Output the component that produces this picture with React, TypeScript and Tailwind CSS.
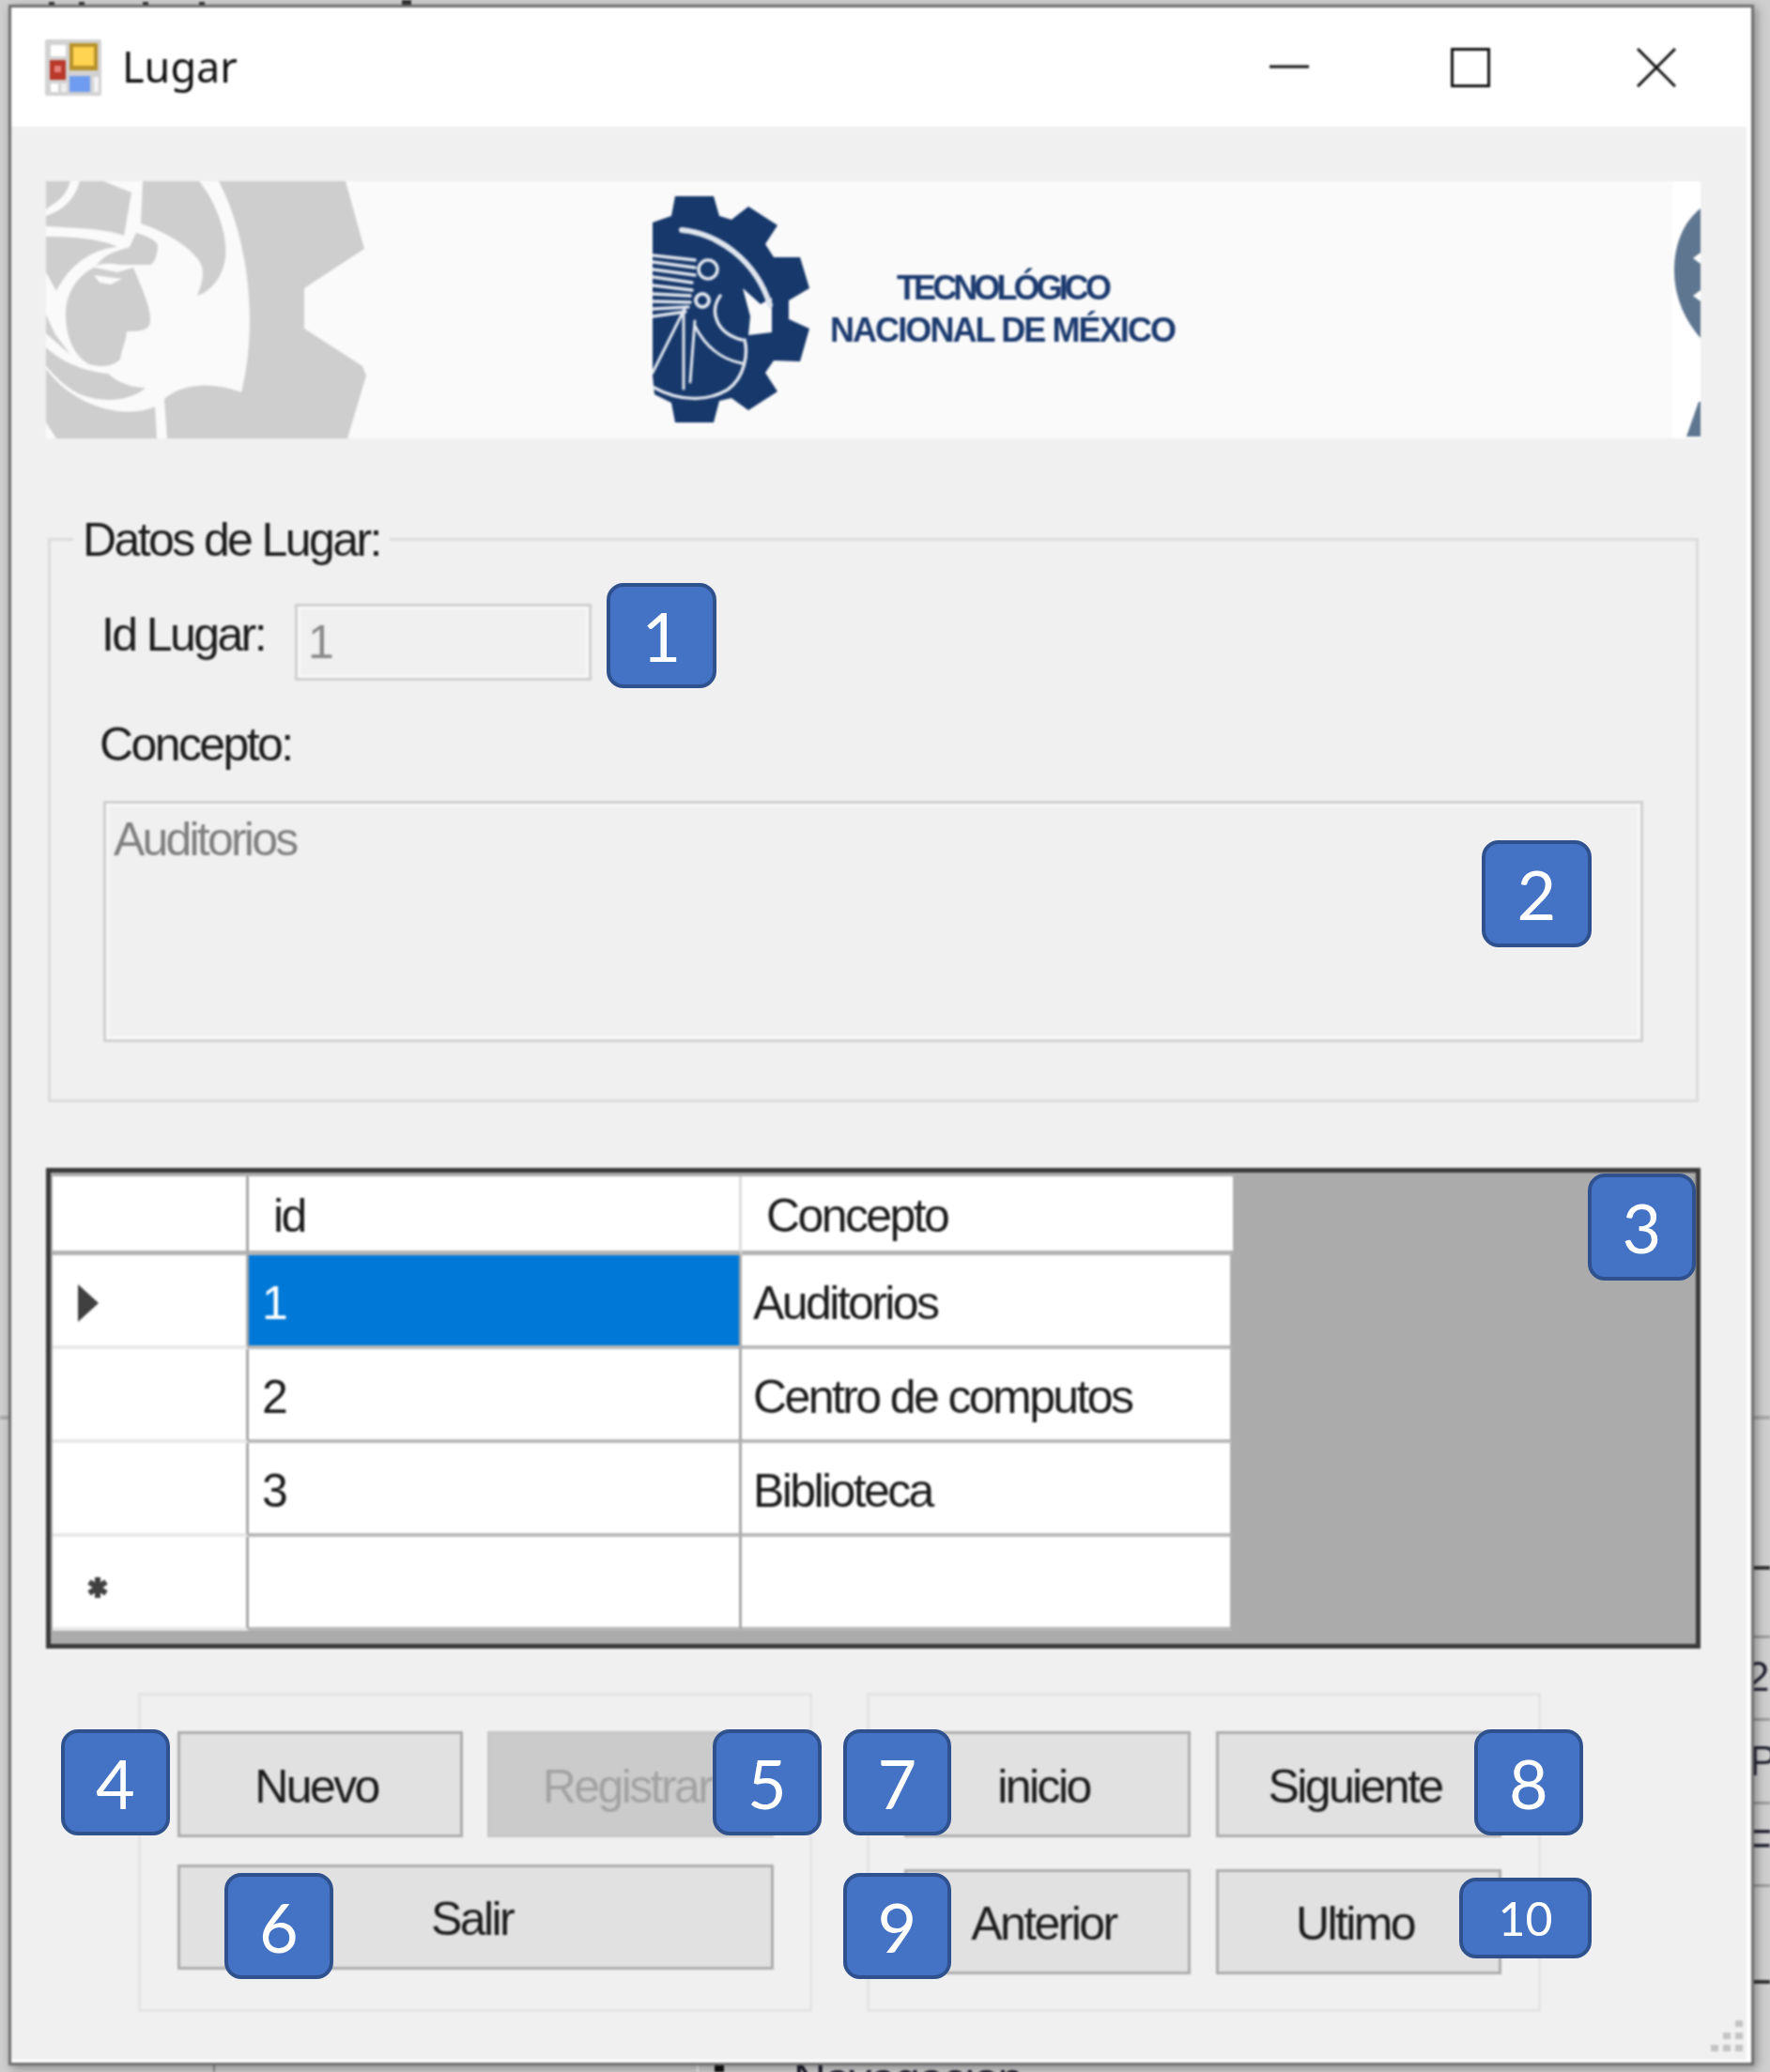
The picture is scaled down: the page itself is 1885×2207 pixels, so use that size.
const textCls = "text-[50px] leading-[50px] tracking-[-2.6px] text-[#1c1c1c]";

const Badge = ({ className, label }: { className: string; label: string }) => (
  <div
    className={`absolute flex items-center justify-center rounded-[18px] border-[4px] border-[#2f528f] bg-[#4472c4] font-['Lato',sans-serif] text-white ${className}`}
  >
    {label}
  </div>
);

const WinButton = ({
  label,
  className,
  disabled,
}: {
  label: string;
  className: string;
  disabled?: boolean;
}) => (
  <button
    className={`flex items-center justify-center border-[3px] pr-[8px] pt-[4px] text-[50px] leading-[50px] tracking-[-2.6px] ${
      disabled
        ? "border-[#c6c6c6] bg-[#cbcbcb] text-[#a3a3a3]"
        : "border-[#adadad] bg-[#e1e1e1] text-[#1c1c1c]"
    } ${className}`}
  >
    {label}
  </button>
);

const AppIcon = () => (
  <svg width="60" height="60" viewBox="0 0 60 60" className="shrink-0">
    <rect width="60" height="60" rx="2" fill="#d2d2d2" />
    <rect x="6" y="6" width="16" height="12" fill="#fff" />
    <rect x="26" y="4" width="30" height="29" fill="#b8922a" />
    <rect x="30" y="8" width="22" height="20" fill="#ffd451" />
    <rect x="5" y="22" width="17" height="21" fill="#b8392a" />
    <rect x="10" y="28" width="7" height="7" fill="#e8837a" />
    <rect x="6" y="47" width="8" height="9" fill="#fff" />
    <rect x="17" y="47" width="6" height="9" fill="#eee" />
    <rect x="26" y="39" width="22" height="17" fill="#6f9bf0" />
    <rect x="52" y="40" width="5" height="16" fill="#f2f2f2" />
  </svg>
);

const Watermark = () => (
  <svg width="341" height="274" viewBox="9 8 341 274" className="shrink-0">
    <path d="M9 8H328L348 80L284 122V165L346 205L350 215L330 282H20L9 265Z" fill="#cecece" />
    <path
      d="M172 8H193C225 70 235 160 217 233C190 222 155 222 135 240L138 282H127L125 248C95 262 40 250 9 208V8Z"
      fill="#fafafa"
    />
    <g fill="#cecece">
      <path d="M9 8H35C30 25 20 30 9 38Z" />
      <path d="M45 8H70L100 20L92 66C70 58 40 58 9 56V45C30 38 40 25 45 8Z" />
      <path d="M112 8H172C190 30 203 65 200 90C197 110 185 125 170 130C178 110 178 100 170 90C155 72 130 60 110 53Z" />
      <path d="M105 63C115 66 125 70 128 76C128 85 125 95 120 97L88 97C75 95 65 95 60 100L70 90C80 82 95 80 98 78Z" />
      <path d="M9 67C40 67 70 70 85 78C60 80 35 95 20 125L9 105Z" />
      <path d="M60 100L85 105L102 100C110 120 120 140 120 155C120 165 115 168 95 168C95 175 90 185 88 198C80 205 70 207 55 203C40 195 30 175 30 150C30 130 40 110 60 100Z" />
      <path d="M9 150L18 170L35 193L9 170Z" />
      <path d="M9 185C30 205 60 212 75 213C85 222 100 228 115 228C100 242 70 245 45 235C30 228 18 215 9 205Z" />
    </g>
    <path d="M60 108L90 112L78 118L66 116Z" fill="#fafafa" />
  </svg>
);

const TecnmLogo = () => (
  <svg width="167" height="245" viewBox="0 0 167 245" className="ml-[305px] mt-[14px] shrink-0 self-start">
    <polygon
      points="24,2 65,2 71,23 84,27 102,13 133,33 120,53 129,67 157,67 167,100 145,113 145,133 167,143 157,178 129,177 120,190 133,210 102,230 84,217 71,220 65,243 24,243 20,222 2,213 0,193 0,30 20,23"
      fill="#17386b"
    />
    <polygon points="96,100 115,117 127,110 127,147 102,150 104,130" fill="#fafafa" />
    <g fill="none" stroke="#dfe5ee" strokeLinecap="round">
      <path d="M31 38C70 42 110 70 125 118" strokeWidth="6" />
      <path d="M0 65L45 70M0 72L45 78M0 80L45 86M0 88L42 94M0 97L42 102M0 106L40 108M0 114L40 115M0 122L38 120M0 130L35 125" strokeWidth="3.5" />
      <circle cx="59" cy="80" r="10" strokeWidth="3.5" />
      <circle cx="53" cy="113" r="7" strokeWidth="4" />
      <path d="M72 108C60 125 68 148 95 155" strokeWidth="3.5" />
      <path d="M35 120L0 190M33 125V207M45 135L40 200" strokeWidth="3" />
      <path d="M0 205C30 222 60 220 80 208C98 195 102 170 98 155" strokeWidth="3.5" />
      <path d="M45 140C55 160 70 175 95 180" strokeWidth="3" />
    </g>
  </svg>
);

const WindowControls = () => (
  <div className="ml-auto flex items-center gap-[152px] pr-[80px]">
    <svg width="42" height="42" viewBox="0 0 42 42">
      <path d="M0 20H42" stroke="#111" strokeWidth="3" />
    </svg>
    <svg width="42" height="42" viewBox="0 0 42 42" className="-ml-[1px]">
      <rect x="1.5" y="1.5" width="39" height="39" fill="none" stroke="#111" strokeWidth="3" />
    </svg>
    <svg width="42" height="42" viewBox="0 0 42 42" className="ml-[4px]">
      <path d="M1 1L41 41M41 1L1 41" stroke="#111" strokeWidth="3" />
    </svg>
  </div>
);

const rows = [
  { id: "1", concepto: "Auditorios", marker: "arrow" },
  { id: "2", concepto: "Centro de computos", marker: "" },
  { id: "3", concepto: "Biblioteca", marker: "" },
  { id: "", concepto: "", marker: "star" },
];

const DataGrid = () => (
  <div className="mt-[70px] h-[512px] w-[1762px] border-[5px] border-[#3a3a3a] bg-[#ababab] pl-[2px] pt-[4px]">
    <div className="grid w-[1257px] grid-cols-[209px_525px_523px] bg-white">
      <div className="h-[84px] border-b-[5px] border-r-[3px] border-b-[#b4b4b4] border-r-[#a8a8a8]" />
      <div className={`flex h-[84px] items-center border-b-[5px] border-r-[3px] border-b-[#b4b4b4] border-r-[#dcdcdc] pl-[26px] pt-[4px] ${textCls}`}>
        id
      </div>
      <div className={`flex h-[84px] items-center border-b-[5px] border-b-[#b4b4b4] pl-[26px] pt-[4px] ${textCls}`}>
        Concepto
      </div>
      {rows.map((r) => (
        <div key={r.concepto + r.id} className="contents">
          <div className="flex h-[100px] items-center border-b-[4px] border-r-[3px] border-b-[#e8e8e8] border-r-[#a8a8a8] pl-[27px] pt-[6px]">
            {r.marker === "arrow" && (
              <svg width="22" height="40" viewBox="0 0 22 40">
                <path d="M0 0L22 20L0 40Z" fill="#404040" />
              </svg>
            )}
            {r.marker === "star" && (
              <svg width="24" height="26" viewBox="0 0 24 26" className="ml-[9px] mt-[6px]">
                <path d="M12 2V24M3 7L21 19M21 7L3 19" stroke="#404040" strokeWidth="6" />
              </svg>
            )}
          </div>
          <div
            className={`flex h-[100px] items-center border-b-[4px] border-r-[3px] border-b-[#b8b8b8] border-r-[#a8a8a8] pl-[14px] pt-[6px] ${textCls} ${
              r.id === "1" ? "bg-[#0078d7] text-white" : ""
            }`}
          >
            {r.id}
          </div>
          <div className={`flex h-[100px] items-center border-b-[4px] border-r-[3px] border-b-[#b8b8b8] border-r-[#ababab] pl-[12px] pt-[6px] ${textCls}`}>
            {r.concepto}
          </div>
        </div>
      ))}
    </div>
  </div>
);

// what shows of the main form behind the dialog
const BehindStrips = () => (
  <>
    <div className="absolute left-0 right-0 top-[1508px] h-[4px] bg-[#a9a9a9]" />
    <div className="absolute left-[52px] top-0 flex h-[6px] gap-[26px]">
      <div className="mt-[2px] h-[4px] w-[6px] bg-[#333]" />
      <div className="mt-[2px] h-[4px] w-[6px] bg-[#333]" />
      <div className="ml-[36px] mt-[2px] h-[4px] w-[6px] bg-[#333]" />
      <div className="ml-[28px] mt-[2px] h-[4px] w-[6px] bg-[#333]" />
      <div className="ml-[184px] h-[6px] w-[10px] bg-[#333]" />
    </div>
    <div className="absolute left-[1860px] top-[1668px] flex w-[25px] flex-col border-b-[4px] border-t-[4px] border-[#333] text-[44px] leading-[44px] text-[#223]">
      <div className="flex h-[73px] items-center border-b-[3px] border-[#9a9a9a]" />
      <div className="flex h-[88px] items-center border-b-[3px] border-[#9a9a9a] pb-[4px] pl-[-4px]">2</div>
      <div className="flex h-[89px] items-center border-b-[3px] border-[#9a9a9a] pl-[3px]">P</div>
      <div className="flex h-[88px] items-center border-b-[3px] border-[#9a9a9a]">F</div>
      <div className="h-[99px]" />
    </div>
    <div className="absolute bottom-0 left-0 flex h-[12px] w-full items-start text-[48px] leading-[48px] tracking-[-1px] text-[#1c1c2c]">
      <div className="ml-[227px] h-full w-[2px] bg-[#8a8a8a]" />
      <div className="ml-[513px] h-full w-[2px] bg-[#f0f0f0]" />
      <div className="ml-[17px] h-full w-[10px] bg-[#111]" />
      <span className="-mt-[4px] ml-[74px]">Navegacion</span>
    </div>
  </>
);

const App = () => (
  <div className="relative h-[2207px] w-[1885px] overflow-hidden bg-[#cfcfcf] font-['Liberation_Sans',sans-serif]">
    <div className="h-full w-full pl-[9px] pt-[5px] blur-[0.8px]">
      <BehindStrips />

      <div className="relative flex h-[2195px] w-[1859px] flex-col border-[3px] border-[#6f6f6f] bg-[#f0f0f0] shadow-[3px_3px_10px_rgba(0,0,0,0.35)]">
        {/* title bar */}
        <div className="flex h-[127px] shrink-0 items-center bg-white pl-[36px]">
          <AppIcon />
          <span className="mb-[2px] ml-[22px] font-['Noto_Sans',sans-serif] text-[45px] leading-[50px] text-[#111]">Lugar</span>
          <WindowControls />
        </div>

        <div className="flex flex-1 flex-col border-b-[3px] border-r-[5px] border-white pl-[37px] pt-[58px]">
          {/* banner */}
          <div className="flex h-[274px] w-[1762px] bg-[#fafafa]">
            <Watermark />
            <TecnmLogo />
            <div className="ml-[25px] mt-[91px] flex w-[361px] flex-col items-center self-start whitespace-nowrap font-bold text-[36px] leading-[45px] text-[#1b3a6f]">
              <span className="tracking-[-3.9px]">TECNOLÓGICO</span>
              <span className="tracking-[-1.9px]">NACIONAL DE MÉXICO</span>
            </div>
            <svg width="30" height="274" viewBox="0 0 30 274" className="ml-auto bg-white">
              <path
                d="M30 29C10 45 2 70 2 95C2 125 15 150 30 167V128L22 122L30 116V88L22 82L30 76Z"
                fill="#5f7690"
              />
              <path d="M28 235L15 272H30V235Z" fill="#5f7690" />
            </svg>
          </div>

          {/* Datos de Lugar */}
          <div className="relative ml-[2px] mt-[106px] h-[601px] w-[1758px] shrink-0 border-[3px] border-[#dcdcdc] pl-[54px] pt-[67px]">
            <span className={`absolute -top-[26px] left-[24px] bg-[#f0f0f0] px-[10px] ${textCls}`}>
              Datos de Lugar:
            </span>
            <div className="flex items-center">
              <span className={`w-[206px] pb-[16px] ${textCls}`}>Id Lugar:</span>
              <div className="flex h-[82px] w-[316px] items-center border-[3px] border-[#d0d0d0] pl-[11px] text-[50px] leading-[50px] tracking-[-2.6px] text-[#8a8a8a] outline outline-[3px] -outline-offset-[6px] outline-[#f8f8f8]">
                1
              </div>
            </div>
            <div className={`-ml-[2px] mt-[43px] ${textCls}`}>Concepto:</div>
            <div className="ml-[2px] mt-[35px] h-[257px] w-[1640px] border-[3px] border-[#d0d0d0] pl-[8px] pt-[13px] text-[50px] leading-[50px] tracking-[-2.8px] text-[#808080] outline outline-[3px] -outline-offset-[6px] outline-[#f8f8f8]">
              Auditorios
            </div>
          </div>

          <DataGrid />

          {/* bottom button groups */}
          <div className="ml-[98px] mt-[47px] flex gap-[58px]">
            <div className="h-[340px] w-[718px] border-[3px] border-[#e4e4e4] pl-[39px] pt-[38px]">
              <div className="flex gap-[26px]">
                <WinButton label="Nuevo" className="h-[113px] w-[304px]" />
                <WinButton label="Registrar" className="h-[113px] w-[305px]" disabled />
              </div>
              <WinButton label="Salir" className="mt-[29px] h-[112px] w-[635px]" />
            </div>
            <div className="h-[340px] w-[718px] border-[3px] border-[#e4e4e4] pl-[37px] pt-[38px]">
              <div className="flex gap-[27px]">
                <WinButton label="inicio" className="h-[113px] w-[305px]" />
                <WinButton label="Siguiente" className="h-[113px] w-[304px]" />
              </div>
              <div className="mt-[34px] flex gap-[27px]">
                <WinButton label="Anterior" className="h-[112px] w-[305px]" />
                <WinButton label="Ultimo" className="h-[112px] w-[304px]" />
              </div>
            </div>
          </div>
        </div>

        {/* resize grip */}
        <svg width="36" height="36" viewBox="0 0 36 36" className="absolute bottom-[9px] right-[8px]" fill="#c4c4c4">
          <rect x="27" y="0" width="8" height="7" />
          <rect x="14" y="13" width="8" height="7" />
          <rect x="27" y="13" width="8" height="7" />
          <rect x="1" y="26" width="8" height="7" />
          <rect x="14" y="26" width="8" height="7" />
          <rect x="27" y="26" width="8" height="7" />
        </svg>
      </div>
    </div>

    <Badge label="1" className="left-[646px] top-[621px] h-[112px] w-[117px] text-[72px]" />
    <Badge label="2" className="left-[1578px] top-[895px] h-[114px] w-[117px] text-[72px]" />
    <Badge label="3" className="left-[1691px] top-[1250px] h-[114px] w-[115px] text-[72px]" />
    <Badge label="4" className="left-[65px] top-[1842px] h-[113px] w-[116px] text-[72px]" />
    <Badge label="5" className="left-[759px] top-[1842px] h-[113px] w-[116px] text-[72px]" />
    <Badge label="6" className="left-[239px] top-[1995px] h-[113px] w-[116px] text-[72px]" />
    <Badge label="7" className="left-[898px] top-[1842px] h-[113px] w-[115px] text-[72px]" />
    <Badge label="8" className="left-[1570px] top-[1842px] h-[113px] w-[116px] text-[72px]" />
    <Badge label="9" className="left-[898px] top-[1995px] h-[113px] w-[115px] text-[72px]" />
    <Badge label="10" className="left-[1554px] top-[2000px] h-[86px] w-[141px] text-[50px]" />
  </div>
);

export default App;
